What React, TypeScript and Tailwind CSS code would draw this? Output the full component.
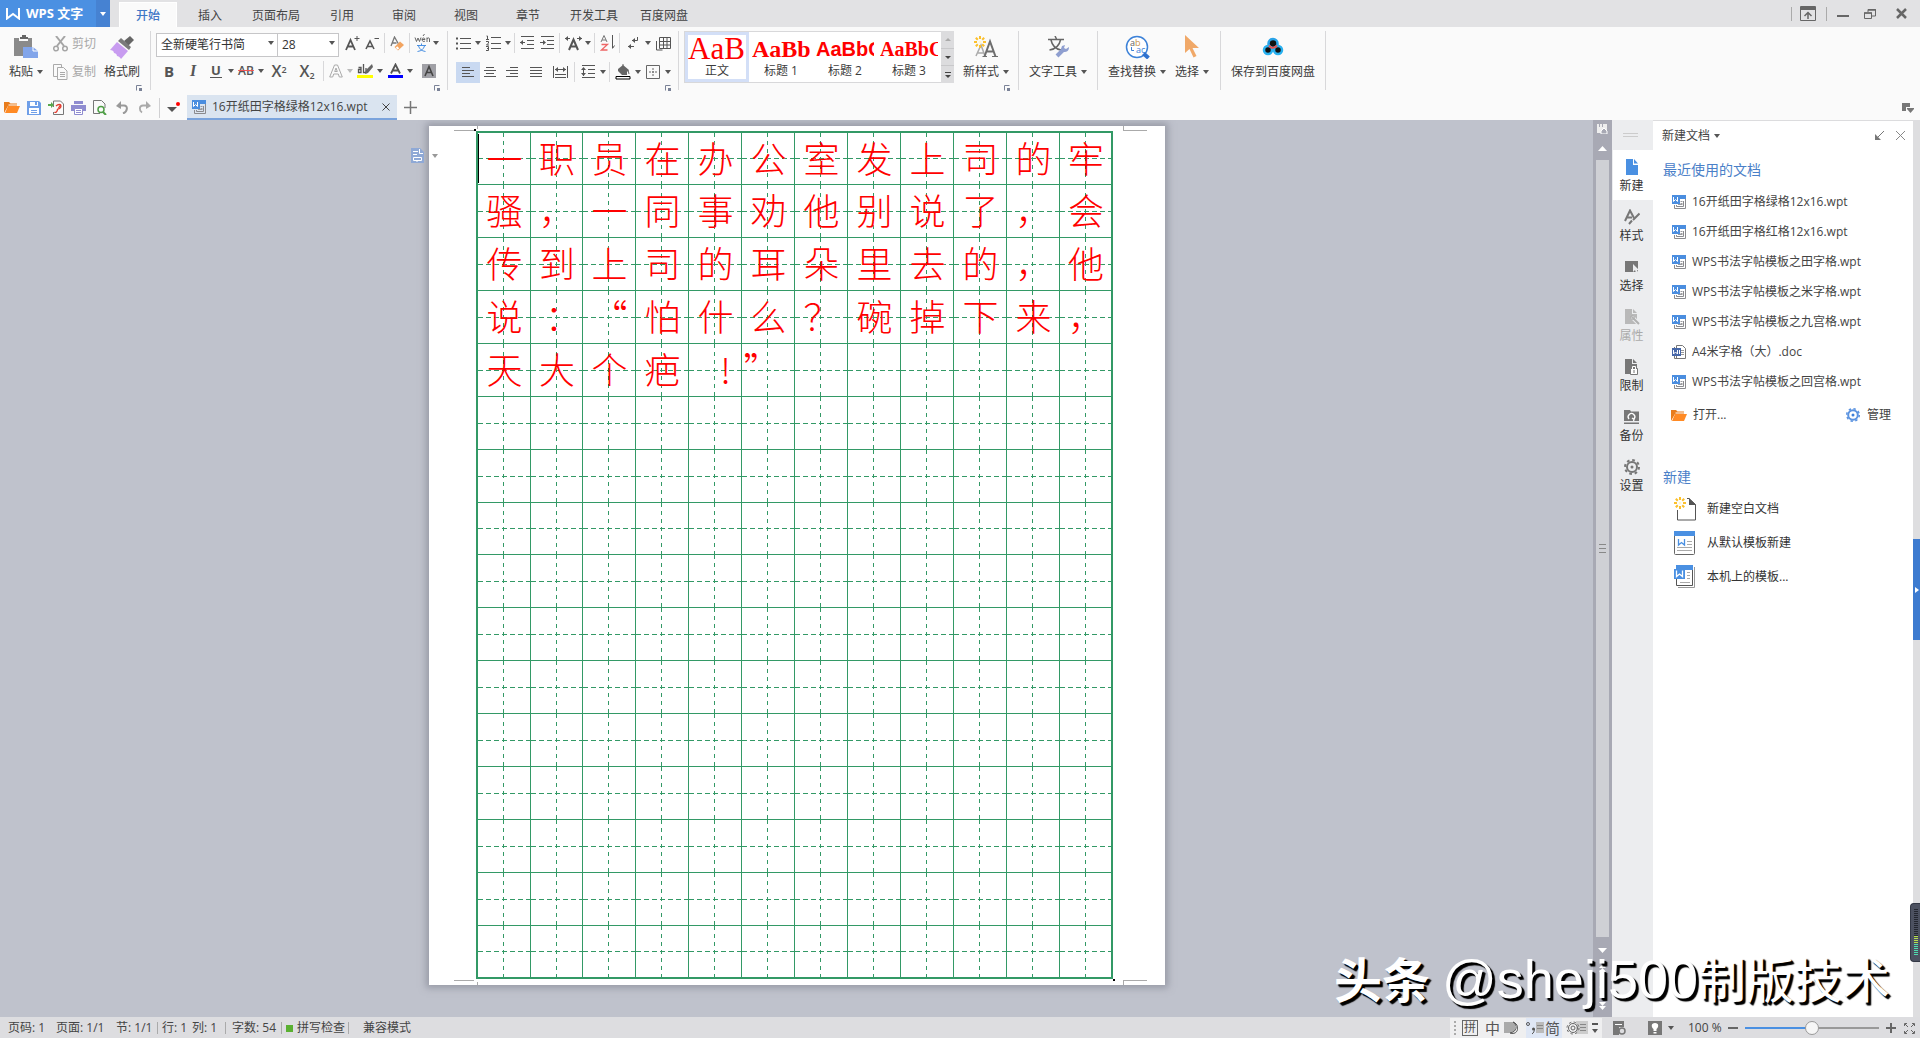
import React, { useState } from 'react';

const UI_FONT = "font-['Open_Sans','Noto_Sans_CJK_SC',sans-serif]";

const TABS = ['开始', '插入', '页面布局', '引用', '审阅', '视图', '章节', '开发工具', '百度网盘'];

const RECENT = [
  { name: '16开纸田字格绿格12x16.wpt', doc: false },
  { name: '16开纸田字格红格12x16.wpt', doc: false },
  { name: 'WPS书法字帖模板之田字格.wpt', doc: false },
  { name: 'WPS书法字帖模板之米字格.wpt', doc: false },
  { name: 'WPS书法字帖模板之九宫格.wpt', doc: false },
  { name: 'A4米字格（大）.doc', doc: true },
  { name: 'WPS书法字帖模板之回宫格.wpt', doc: false },
];

const LINES = ['一职员在办公室发上司的牢', '骚，一同事劝他别说了，会', '传到上司的耳朵里去的，他', '说：“怕什么？碗掉下来，', '天大个疤!”'];

const CELLS = Array.from({ length: 16 * 12 }, (_, i) => (LINES[Math.floor(i / 12)] || '')[i % 12] || '');

const STYLES = [
  { name: '正文', sample: 'AaB', cls: "font-['Liberation_Serif',serif] text-[31px]" },
  { name: '标题 1', sample: 'AaBb', cls: "font-['Liberation_Serif',serif] text-2xl font-bold" },
  { name: '标题 2', sample: 'AaBbC', cls: "font-['Liberation_Sans',sans-serif] text-xl font-bold" },
  { name: '标题 3', sample: 'AaBbC', cls: "font-['Liberation_Serif',serif] text-xl font-bold" },
];

/* ---------- small shared pieces ---------- */

const Svg = ({ w, h, label, children }: { w: number; h: number; label?: string; children: React.ReactNode }) => (
  <svg width={w} height={h} viewBox={`0 0 ${w} ${h}`} fill="none" aria-label={label} className="shrink-0">
    {children}
  </svg>
);

const Caret = ({ color = '#555' }: { color?: string }) => (
  <Svg w={6} h={4}>
    <path d="M0 0h6L3 4z" fill={color} />
  </Svg>
);

const Sep = () => <div className="mx-0.5 h-5 w-px bg-[#d8d8da]" />;

const GroupSep = () => <div className="h-[59px] w-px self-start bg-[#d8d8da]" />;

const Tool = ({ label, w = 'w-[22px]', children }: { label: string; w?: string; children: React.ReactNode }) => (
  <button aria-label={label} className={`flex h-5 shrink-0 items-center justify-center ${w}`}>
    {children}
  </button>
);

const Drop = ({ color }: { color?: string }) => (
  <button aria-label="更多" className="flex h-5 w-2 shrink-0 items-center justify-center">
    <Caret color={color} />
  </button>
);

const Launcher = () => (
  <button aria-label="对话框" className="flex h-[6px] justify-end">
    <Svg w={6} h={6}>
      <path d="M.5 5.5v-5h5" stroke="#7a8297" />
      <path d="M3 3h3v3H3z" fill="#7a8297" />
    </Svg>
  </button>
);

const BigTool = ({ label, drop, w, children }: { label: string; drop?: boolean; w: string; children: React.ReactNode }) => (
  <button className={`flex shrink-0 flex-col items-center ${w}`}>
    <span className="flex h-[31px] items-center justify-center">{children}</span>
    <span className="flex h-5 items-center gap-1 text-xs whitespace-nowrap text-[#3c3c3c]">
      {label}
      {drop && <Caret />}
    </span>
  </button>
);

/* ---------- icons ---------- */

const WptIcon = () => (
  <Svg w={14} h={14}>
    <path d="M0 0h14v4H8v5H0z" fill="#4a8ddf" />
    <path d="M1.500 2v4.500l2-2 2 2V2" stroke="#fff" />
    <path d="M13.500 4v9.500h-11V10M11.500 6v5.500h-7V10" stroke="#8a8a8e" />
    <path d="M8.500 6.500h2M8.500 8.500h2M6 9.500h4.500" stroke="#9a9a9e" />
  </Svg>
);

const DocIcon = () => (
  <Svg w={14} h={14}>
    <path d="M4.500.5h6l3 3v10h-9z" fill="#fff" stroke="#777" />
    <path d="M2.500 2v11.500h9" stroke="#777" />
    <path d="M9 5.500h3M9 7.500h3M9 9.500h3" stroke="#999" />
    <path d="M0 3h9v8H0z" fill="#4767a8" />
    <path d="M1.500 5v4l2-2 2 2V5M7.500 5v4" stroke="#fff" />
  </Svg>
);

const FolderIcon = () => (
  <Svg w={16} h={13}>
    <path d="M0 1h5l1.500 1.500H13V5H4L0 12z" fill="#e87c1c" />
    <path d="M4 5h12l-3 7H1z" fill="#ff8a24" />
    <path d="M4.500 4h9" stroke="#fff" />
  </Svg>
);

const Spark = () => (
  <g stroke="#fbc02d" strokeWidth="2">
    <path d="M6 0v3M6 9v3M0 6h3M9 6h3M1.800 1.800l2 2M8.200 8.200l2 2M10.200 1.800l-2 2M3.800 8.200l-2 2" />
    <circle cx="6" cy="6" r="1.500" fill="#fff6cf" stroke="none" />
  </g>
);

const AlignIcon = ({ rows }: { rows: number[][] }) => (
  <Svg w={13} h={12}>
    {rows.map(([x, w], i) => (
      <path key={i} d={`M${x} ${i * 3 + 1.5}h${w}`} stroke="#555" />
    ))}
  </Svg>
);

/* ---------- title bar ---------- */

const TitleBar = () => {
  const [tab, setTab] = useState('开始');
  return (
    <header className="flex h-[27px] shrink-0 items-stretch bg-[#e2e2e4]">
      <button className="flex w-24 items-center gap-1.5 bg-[#4b90e2] pl-1.5 text-[13px] font-bold whitespace-nowrap text-white">
        <Svg w={14} h={12}>
          <path d="M1 0v10.500l6-4.500 6 4.500V0" stroke="#fff" strokeWidth="2" />
        </Svg>
        WPS 文字
      </button>
      <button aria-label="菜单" className="flex w-3.5 items-center justify-center bg-[#4682d2]">
        <Caret color="#fff" />
      </button>
      <nav className="ml-[9px] flex gap-1 pt-0.5">
        {TABS.map(t => (
          <button
            key={t}
            onClick={() => setTab(t)}
            className={`pt-0.5 text-xs ${t.length > 2 ? 'w-[66px]' : 'w-[58px]'} ${
              t === tab ? 'border border-b-0 border-white bg-[#fafafa] font-medium text-[#3f76c5]' : 'text-[#444]'
            }`}
          >
            {t}
          </button>
        ))}
      </nav>
      <div className="ml-auto flex items-center text-[#666]">
        <div className="h-3.5 w-px bg-[#aaa]" />
        <button aria-label="功能区" className="px-2">
          <Svg w={16} h={15}>
            <path d="M.5.5h15v14H.5z" stroke="#666" />
            <path d="M1 1h14v3H1z" fill="#666" />
            <path d="M8 13V7M4.500 10L8 6.500l3.500 3.500" stroke="#666" strokeWidth="1.500" />
          </Svg>
        </button>
        <div className="ml-0.5 h-3.5 w-px bg-[#aaa]" />
        <button aria-label="最小化" className="pt-1 pr-[15px] pl-2.5">
          <Svg w={12} h={2}>
            <path d="M0 1h12" stroke="#666" strokeWidth="2" />
          </Svg>
        </button>
        <button aria-label="还原">
          <Svg w={12} h={10}>
            <path d="M.5 4h7v5.500h-7zM4 3V.500h7.500V7H8" stroke="#666" />
            <path d="M0 4h8M4 1h8" stroke="#666" strokeWidth="1.500" />
          </Svg>
        </button>
        <button aria-label="关闭" className="pr-[13px] pl-5">
          <Svg w={11} h={11}>
            <path d="M1 1l9 9M10 1l-9 9" stroke="#666" strokeWidth="2.500" />
          </Svg>
        </button>
      </div>
    </header>
  );
};

/* ---------- ribbon ---------- */

const ClipboardGroup = () => (
  <div className="flex w-[150px] flex-col">
    <div className="flex h-[53px]">
      <BigTool label="粘贴" drop w="ml-2 w-9">
        <Svg w={26} h={24}>
          <path d="M1 3h5v3h9V3h4v9h-4l-5 5v4H1z" fill="#8a8a8a" />
          <path d="M7 4V2h2V0h4v2h2v2z" fill="#666" />
          <path d="M10 12h10l5 4v7H10z" fill="#82a5ea" />
          <path d="M20 12v4h5" stroke="#fff" />
        </Svg>
      </BigTool>
      <div className="ml-[9px] flex flex-col text-xs text-[#a8a8a8]">
        <button className="flex h-[29px] items-center gap-1 pb-1">
          <Svg w={15} h={16}>
            <path d="M3 0l8 10M12 0L4 10" stroke="#a5a5a5" strokeWidth="2" />
            <circle cx="3" cy="12.500" r="2.300" stroke="#a5a5a5" strokeWidth="1.500" />
            <circle cx="12" cy="12.500" r="2.300" stroke="#a5a5a5" strokeWidth="1.500" />
          </Svg>
          剪切
        </button>
        <button className="flex h-6 items-center gap-1">
          <Svg w={15} h={16}>
            <path d="M4 12.500H.500V.500h8V3" stroke="#aaa" />
            <path d="M4.500 3.500h6l3.500 3.500v8.500H4.500z" stroke="#aaa" />
            <path d="M7 8.500h5M7 10.500h5M7 12.500h5" stroke="#aaa" />
          </Svg>
          复制
        </button>
      </div>
      <BigTool label="格式刷" w="ml-2 w-9">
        <Svg w={24} h={24}>
          <path d="M20 1l4 4-6 6-4-5z" fill="#666" />
          <path d="M11 3l10 9-2 3L8 6z" fill="#7a7a7a" />
          <path d="M7 7l11 9-7 8c-1-2-3-3-4-3 0-2-2-3-3-3 0-2-2-3-4-3z" fill="#c89cf0" />
        </Svg>
      </BigTool>
    </div>
    <div className="flex justify-end pt-px pr-2">
      <Launcher />
    </div>
  </div>
);

const FontGroup = () => (
  <div className="flex w-[296px] flex-col">
    <div className="flex h-6 items-center pl-[5px]">
      <div className="relative h-6 w-[122px]">
        <select aria-label="字体" className="h-full w-full appearance-none border border-[#c6c6c8] bg-white pl-1 text-xs text-[#333]">
          <option>全新硬笔行书简</option>
        </select>
        <span className="pointer-events-none absolute top-2.5 right-1">
          <Caret />
        </span>
      </div>
      <div className="relative -ml-px h-6 w-[62px]">
        <select aria-label="字号" className="h-full w-full appearance-none border border-[#c6c6c8] bg-white pl-1 text-xs text-[#333]">
          <option>28</option>
        </select>
        <span className="pointer-events-none absolute top-2.5 right-1">
          <Caret />
        </span>
      </div>
      <div className="ml-[3px] flex items-center">
        <Tool label="增大字号" w="w-5">
          <Svg w={15} h={15}>
            <path d="M1 14L5.500 4l4.500 10M2.500 10.500h6" stroke="#555" strokeWidth="1.800" />
            <path d="M12 0v5M9.500 2.500h5" stroke="#555" />
          </Svg>
        </Tool>
        <Tool label="减小字号" w="w-5">
          <Svg w={15} h={15}>
            <path d="M1 13L5 5l4 8M2.500 10.500h5" stroke="#555" strokeWidth="1.600" />
            <path d="M9.500 2.500H14" stroke="#555" />
          </Svg>
        </Tool>
        <Sep />
        <Tool label="清除格式" w="w-5">
          <Svg w={15} h={15}>
            <path d="M1 10L4.500 1l4 7M2.500 7h4" stroke="#777" strokeWidth="1.300" />
            <path d="M10 5.500L14 9l-6 5.500-3.500-3.500z" fill="#f2a460" />
            <path d="M6.500 11l2 2" stroke="#fff" strokeWidth="2" />
          </Svg>
        </Tool>
        <Sep />
        <Tool label="拼音指南" w="w-5">
          <Svg w={16} h={18}>
            <path
              d="M1 3.500l1.500 4L4 4l1.500 3.500 1.500-4M8 5.500h3c0-2-3-2-3 0s2 2.500 3 1.500M10.500 0L9 2M13 8V3.500M13 5c.5-1.500 2.500-1.500 2.500 0v3"
              stroke="#666"
            />
            <path d="M3 11.500h9M7.500 9.500v2M4.500 12c1 3 3 5 7 5.500M10.500 12c-1 3-3 5-7 5.500" stroke="#4a90e2" />
          </Svg>
        </Tool>
        <Drop />
      </div>
    </div>
    <div className="mt-1 flex h-6 items-center pl-1.5 text-[#555]">
      <Tool label="加粗" w="w-6">
        <b className="text-[15px]">B</b>
      </Tool>
      <Tool label="倾斜" w="w-6">
        <i className="font-['Liberation_Serif',serif] text-base font-bold">I</i>
      </Tool>
      <Tool label="下划线">
        <span className="border-b border-[#555] px-px text-[13px] leading-[13px] font-bold">U</span>
      </Tool>
      <Drop />
      <Tool label="删除线">
        <span className="text-xs font-semibold line-through decoration-[#e55]">AB</span>
      </Tool>
      <Drop />
      <Tool label="上标" w="w-7">
        <span className="text-base font-semibold">
          X<sup className="text-[9px]">2</sup>
        </span>
      </Tool>
      <Tool label="下标" w="w-7">
        <span className="text-base font-semibold">
          X<sub className="text-[9px]">2</sub>
        </span>
      </Tool>
      <Sep />
      <Tool label="文字效果" w="w-5">
        <Svg w={14} h={14}>
          <path d="M.700 13L5.500 1h3L13.300 13h-3l-1-3H4.700l-1 3zM5.700 7.500h2.600L7 4z" stroke="#aaa" />
        </Svg>
      </Tool>
      <Drop color="#bbb" />
      <Tool label="突出显示">
        <Svg w={16} h={16}>
          <path d="M0 12h16v3H0z" fill="#ff0" />
          <path d="M1.500 4.500h2.500v5H1.500v-3H4M6.500 1v8.500H9V5" stroke="#555" strokeWidth="1.300" />
          <path d="M15 1L9 7l-1 4 3-1 5-6z" fill="#666" />
        </Svg>
      </Tool>
      <Drop />
      <Tool label="字体颜色">
        <Svg w={15} h={16}>
          <path d="M0 12h15v3H0z" fill="#00f" />
          <path d="M3 10.500l4.500-9 4.500 9M4.500 7.500h6" stroke="#555" strokeWidth="1.800" />
        </Svg>
      </Tool>
      <Drop />
      <Tool label="字符底纹" w="w-[30px]">
        <Svg w={14} h={14}>
          <path d="M0 0h14v14H0z" fill="#a0a0a6" />
          <path d="M3 12l4-9.500 4 9.500M4.500 8.500h5" stroke="#444" strokeWidth="1.600" />
        </Svg>
      </Tool>
    </div>
    <div className="flex justify-end pt-0.5 pr-[7px]">
      <Launcher />
    </div>
  </div>
);

const ParagraphGroup = () => (
  <div className="flex w-[230px] flex-col">
    <div className="flex h-6 items-center pl-1">
      <Tool label="项目符号">
        <Svg w={15} h={14}>
          <path d="M4 2.500h11M4 7.500h11M4 12.500h11" stroke="#555" />
          <path d="M0 1.500h2v2H0zM0 6.500h2v2H0zM0 11.500h2v2H0z" fill="#555" />
        </Svg>
      </Tool>
      <Drop />
      <Tool label="编号">
        <Svg w={15} h={16}>
          <path d="M5 2.500h10M5 8.500h10M5 13.500h10" stroke="#555" />
          <path d="M.500 1h1v3M0 4.500h3M0 6.500h2.500v1.500L.500 10h2.500M0 11.500h2.500v4H0M1 13.500h1" stroke="#555" />
        </Svg>
      </Tool>
      <Drop />
      <Sep />
      <Tool label="减少缩进" w="w-5">
        <Svg w={14} h={14}>
          <path d="M1 .500h13M7 4.500h7M7 8.500h7M1 12.500h13M0 6.500h5" stroke="#555" />
          <path d="M3 4v5L0 6.500z" fill="#555" />
        </Svg>
      </Tool>
      <Tool label="增加缩进" w="w-5">
        <Svg w={14} h={14}>
          <path d="M1 .500h13M7 4.500h7M7 8.500h7M1 12.500h13M0 6.500h5" stroke="#555" />
          <path d="M3 4v5l3-2.500z" fill="#555" />
        </Svg>
      </Tool>
      <Sep />
      <Tool label="字符缩放">
        <Svg w={17} h={15}>
          <path d="M4 14L8.500 3.500l4.500 10.500M5 10.500h7" stroke="#555" strokeWidth="2" />
          <path d="M0 2.500h5M12 2.500h5" stroke="#555" />
          <path d="M3 0v5L0 2.500zM14 0v5l3-2.500z" fill="#555" />
        </Svg>
      </Tool>
      <Drop />
      <Sep />
      <Tool label="排序" w="w-5">
        <Svg w={15} h={16}>
          <path d="M1 7l3-6.500L7 7M2 5h4" stroke="#777" />
          <path d="M1.500 9.500h6L1.500 15h6" stroke="#e66" strokeWidth="1.300" />
          <path d="M12.500 0v13M12.500 13.500l2-3" stroke="#555" />
        </Svg>
      </Tool>
      <Sep />
      <Tool label="显示标记">
        <Svg w={12} h={14}>
          <path d="M10.500 1v3.500H5M1 10.500h6" stroke="#555" />
          <path d="M8 2v5L5 4.500zM4 8v5l-3-2.500z" fill="#555" />
        </Svg>
      </Tool>
      <Drop />
      <Tool label="表格">
        <Svg w={15} h={15}>
          <path d="M3.500 1.500h11v11h-11zM3.500 5.500h11M3.500 9h11M7.500 1.500v11M11 1.500v11M.500 5v9h6" stroke="#555" />
        </Svg>
      </Tool>
    </div>
    <div className="mt-[5px] flex h-6 items-center pl-2">
      <button aria-label="左对齐" className="flex h-[21px] w-6 items-center justify-center bg-[#c9d9f1]">
        <AlignIcon rows={[[0, 8], [0, 12], [0, 8], [0, 12]]} />
      </button>
      <Tool label="居中" w="w-5">
        <AlignIcon rows={[[2, 8], [0, 12], [2, 8], [0, 12]]} />
      </Tool>
      <Tool label="右对齐" w="w-6">
        <AlignIcon rows={[[4, 8], [0, 12], [4, 8], [0, 12]]} />
      </Tool>
      <Tool label="两端对齐" w="w-6">
        <AlignIcon rows={[[0, 12], [0, 12], [0, 12], [0, 12]]} />
      </Tool>
      <Tool label="分散对齐" w="w-6">
        <Svg w={15} h={12}>
          <path d="M.500 0v12M14.500 0v12M2 3.500h11M2 8.500h11M2 11.500h11" stroke="#555" />
          <path d="M5 1v5L2 3.500zM10 1v5l3-2.500z" fill="#555" />
        </Svg>
      </Tool>
      <Sep />
      <Tool label="行距">
        <Svg w={15} h={14}>
          <path d="M1 .500h13M7 4.500h7M7 8.500h7M1 12.500h13M2.500 3v8" stroke="#555" />
          <path d="M0 5h5L2.500 2zM0 8h5l-2.500 3z" fill="#555" />
        </Svg>
      </Tool>
      <Drop />
      <Sep />
      <Tool label="底纹颜色">
        <Svg w={16} h={16}>
          <path d="M3 5l5-4 6 5-2 2v3l-5 0-4-4z" fill="#666" />
          <path d="M8 0v4M13 6l1 4" stroke="#666" />
          <path d="M1 12.500h14v2.500H1z" fill="#fff" stroke="#000" />
        </Svg>
      </Tool>
      <Drop />
      <Tool label="边框">
        <Svg w={14} h={14}>
          <path d="M.500.500h13v13H.500z" stroke="#666" />
          <path d="M7 3v8M3 7h8" stroke="#666" strokeDasharray="2 1" />
        </Svg>
      </Tool>
      <Drop />
    </div>
    <div className="flex justify-end pt-px pr-[7px]">
      <Launcher />
    </div>
  </div>
);

const StyleGroup = () => (
  <div className="flex w-[339px] pl-[5px]">
    <div className="flex h-[52px] border border-[#d8d8da] bg-white">
      {STYLES.map((s, i) => (
        <button
          key={s.name}
          className={`flex w-16 flex-col items-center overflow-hidden border-[3px] ${i === 0 ? 'border-[#d3dff7]' : 'border-transparent'}`}
        >
          <span className={`flex h-7 w-full shrink-0 items-center overflow-hidden leading-7 whitespace-nowrap text-[#f00] ${s.cls}`}>{s.sample}</span>
          <span className="text-xs leading-4 text-[#3c3c3c]">{s.name}</span>
        </button>
      ))}
      <div className="-my-px -mr-px flex w-[13px] flex-col gap-px bg-[#c8c8ca]">
        {['#aaa', '#444', '#444'].map((c, i) => (
          <button key={i} aria-label="滚动样式" className="flex flex-1 flex-col items-center justify-center gap-0.5 bg-[#dcdcde]">
            {i === 2 && <span className="h-px w-1.5 bg-[#444]" />}
            {i === 0 ? (
              <Svg w={6} h={3}>
                <path d="M0 3h6L3 0z" fill={c} />
              </Svg>
            ) : (
              <Svg w={6} h={3}>
                <path d="M0 0h6L3 3z" fill={c} />
              </Svg>
            )}
          </button>
        ))}
      </div>
    </div>
    <div className="flex flex-1 flex-col">
      <BigTool label="新样式" drop w="h-[53px] w-full">
        <Svg w={24} h={22}>
          <path d="M2 20l5-11 4 11M4 17h6" stroke="#aaa" strokeWidth="1.500" />
          <path d="M10.500 20.500L16 5.500l5.500 15M12.500 15.500h7" stroke="#6e6e6e" strokeWidth="2" />
          <path d="M8.500 20.500h4.500M18 20.500h6" stroke="#6e6e6e" />
          <Spark />
        </Svg>
      </BigTool>
      <div className="flex justify-end pt-px pr-2">
        <Launcher />
      </div>
    </div>
  </div>
);

const Ribbon = () => (
  <div className="flex h-[66px] shrink-0 items-start bg-[#fafafa] pt-1">
    <ClipboardGroup />
    <GroupSep />
    <FontGroup />
    <GroupSep />
    <ParagraphGroup />
    <GroupSep />
    <StyleGroup />
    <GroupSep />
    <BigTool label="文字工具" drop w="w-[78px]">
      <Svg w={22} h={22}>
        <path d="M1 3.500h16M8 0l1.500 3M4 4c1 5 5 9 10 10M13.500 4c-1 5-5 9-11 10" stroke="#666" strokeWidth="1.500" />
        <path d="M10 20l7-7" stroke="#8f9fd0" strokeWidth="4" />
        <path d="M15 10l3-1-1 3 2 1 3-2c0 4-2 5-5 5l-3-3z" fill="#8f9fd0" />
      </Svg>
    </BigTool>
    <GroupSep />
    <BigTool label="查找替换" drop w="ml-2 w-[62px]">
      <Svg w={25} h={24}>
        <circle cx="12" cy="12" r="10.500" fill="#fff" stroke="#3d82d8" strokeWidth="1.500" />
        <path d="M18.500 18.500l5 4.500" stroke="#2f72cf" strokeWidth="4" />
        <text x="5" y="11" fontSize="9" fill="#666">
          a<tspan fill="#c9924a">b</tspan>
        </text>
        <text x="11" y="18" fontSize="9" fill="#3d82d8">
          ac
        </text>
        <path d="M6.500 12v3.500H9" stroke="#3d82d8" />
      </Svg>
    </BigTool>
    <BigTool label="选择" drop w="ml-px w-[46px]">
      <Svg w={16} h={23}>
        <path d="M1 0v18l4.500-4 4 8.500 3-1.500-4-8H15z" fill="#f0a868" />
      </Svg>
    </BigTool>
    <div className="w-[5px]" />
    <GroupSep />
    <BigTool label="保存到百度网盘" w="w-[104px]">
      <Svg w={22} h={20}>
        <path d="M11 6v2L6 13M11 8l5 5" stroke="#111" strokeWidth="8" />
        <circle cx="11" cy="6.500" r="4.500" fill="#111" stroke="#29a3e8" strokeWidth="2.500" />
        <circle cx="6" cy="13" r="4" fill="#111" stroke="#29b1f0" strokeWidth="2.500" />
        <circle cx="16" cy="13" r="4" fill="#111" stroke="#29b1f0" strokeWidth="2.500" />
        <path d="M7 8.500c2 3 6 3 8 0" stroke="#e8504e" strokeWidth="2" />
      </Svg>
    </BigTool>
    <GroupSep />
  </div>
);

/* ---------- quick access and document tab ---------- */

const QuickBar = () => (
  <div className="flex h-[27px] shrink-0 items-end bg-[#fafafa] pl-px">
    <div className="flex h-[25px] items-center">
      <Tool label="打开">
        <FolderIcon />
      </Tool>
      <Tool label="保存">
        <Svg w={14} h={14}>
          <path d="M0 0h12l2 2v12H0z" fill="#6f9fe8" />
          <path d="M3 1h8v4H3zM2 7h10v6H2z" fill="#fff" />
          <path d="M8 1h2v3H8zM4 9h6v1H4zM4 11h6v1H4z" fill="#6f9fe8" />
        </Svg>
      </Tool>
      <Tool label="输出PDF">
        <Svg w={16} h={15}>
          <path d="M5.500 7V1h7l3 3v10.500h-10V12" stroke="#777" />
          <path d="M10.500 8l2-3M8 6c2-2 5-2 5 0s-2 3-3.500 3M9.500 9c0 3-2 4-3 3" stroke="#e23b2e" strokeWidth="1.300" />
          <path d="M0 4h3V2l3 3-3 3V6H0z" fill="#58a84c" />
        </Svg>
      </Tool>
      <Tool label="打印">
        <Svg w={15} h={14}>
          <path d="M3 0h9v3H3zM0 4h15v6H0z" fill="#8f8cd0" />
          <path d="M3.500 7.500h8v6h-8z" fill="#fff" stroke="#8f8cd0" />
          <path d="M5 9.500h5M5 11.500h5" stroke="#8f8cd0" />
        </Svg>
      </Tool>
      <Tool label="打印预览">
        <Svg w={14} h={15}>
          <path d="M7 13.500H.500V.500h8L12 4v4" stroke="#777" />
          <circle cx="8" cy="9.500" r="3" stroke="#4f9e46" strokeWidth="1.500" />
          <path d="M10 12l3 3" stroke="#4f9e46" strokeWidth="2" />
        </Svg>
      </Tool>
      <Tool label="撤销">
        <Svg w={13} h={13}>
          <path d="M2 4.500h6c4 0 4 6-1 8" stroke="#999" strokeWidth="2" />
          <path d="M5 0v8L0 5z" fill="#999" />
        </Svg>
      </Tool>
      <Tool label="恢复">
        <Svg w={13} h={13}>
          <path d="M11 4.500H5c-4 0-4 5-1 7" stroke="#aaa" strokeWidth="1.800" />
          <path d="M8 0v8l5-3z" fill="#aaa" />
        </Svg>
      </Tool>
      <div className="ml-1 h-5 w-px bg-[#d0d0d2]" />
      <button aria-label="自定义" className="ml-1.5 flex w-[21px]">
        <Svg w={14} h={14}>
          <path d="M1 6h10l-5 5z" fill="#555" />
          <circle cx="12" cy="3" r="2" fill="#f00" />
        </Svg>
      </button>
    </div>
    <div className="flex h-[25px] w-[210px] items-center border-b-2 border-[#7aa3dc] bg-[#dae4f0] pl-[5px] text-xs text-[#444]">
      <WptIcon />
      <span className="ml-1.5 flex-1 whitespace-nowrap">16开纸田字格绿格12x16.wpt</span>
      <button aria-label="关闭文档" className="pr-[7px]">
        <Svg w={8} h={8}>
          <path d="M.500.500l7 7M7.500.500l-7 7" stroke="#444" />
        </Svg>
      </button>
    </div>
    <button aria-label="新建标签" className="ml-[7px] flex h-[25px] items-center">
      <Svg w={13} h={13}>
        <path d="M6.500 0v13M0 6.500h13" stroke="#777" strokeWidth="1.500" />
      </Svg>
    </button>
    <button aria-label="窗口列表" className="mr-1.5 ml-auto flex h-[25px] items-center">
      <Svg w={12} h={10}>
        <path d="M0 0h8v4H4v4H0z" fill="#777" />
        <path d="M5 5h7v1L8.500 10 5 6z" fill="#777" />
      </Svg>
    </button>
  </div>
);

/* ---------- document ---------- */

// dashed centre lines of one writing cell
const CELL =
  'flex items-center justify-center border-r border-b border-[#339966] pb-1 pl-0.5 [background-image:repeating-linear-gradient(to_bottom,#339966_0_4px,transparent_4px_8px),repeating-linear-gradient(to_right,#339966_0_5px,transparent_5px_8px)] [background-size:1px_100%,100%_1px] [background-position:center] [background-repeat:no-repeat]';

const Page = () => (
  <main className="relative flex min-w-0 flex-1 justify-center overflow-hidden bg-[#bfc2cc] pt-1.5">
    <article className="relative h-[859px] w-[736px] shrink-0 bg-white pt-[5px] pl-[47px] shadow-[0_0_7px_3px_rgba(120,122,135,0.55)]">
      <div className="grid w-[637px] grid-cols-[53px_52px_repeat(9,53px)_51px] grid-rows-[52px_repeat(6,53px)_52px_repeat(7,53px)_51px] border-2 border-[#339966]">
        {CELLS.map((ch, i) => (
          <div
            key={i}
            className={`${CELL} ${i % 12 === 11 ? 'border-r-0' : ''} ${i >= 180 ? 'border-b-0' : ''} font-['Noto_Sans_CJK_SC',sans-serif] text-4xl leading-none font-light text-[#f00]`}
          >
            <span className={ch === '”' ? 'mr-auto' : ch === '!' ? 'pl-5' : ch === '：' ? 'pl-3' : ''}>{ch}</span>
          </div>
        ))}
      </div>
      {/* margin marks and the caret sit over the sheet */}
      <div className="absolute top-1 left-[25px] h-px w-[22px] bg-[#aaa]" />
      <div className="absolute top-0 left-12 h-[3px] w-px bg-[#aaa]" />
      <div className="absolute top-[3px] left-[45px] h-0.5 w-0.5 bg-black" />
      <div className="absolute top-0 left-[694px] h-[5px] w-6 border-b border-l border-[#aaa]" />
      <div className="absolute bottom-1 left-[25px] h-px w-5 bg-[#aaa]" />
      <div className="absolute bottom-0 left-12 h-[3px] w-px bg-[#aaa]" />
      <div className="absolute bottom-1 left-[684px] h-0.5 w-0.5 bg-black" />
      <div className="absolute bottom-0 left-[694px] h-[5px] w-6 border-t border-l border-[#aaa]" />
      <div className="absolute top-2 left-[49px] h-[49px] w-px bg-black" />
      <button aria-label="段落布局" className="absolute top-[22px] -left-[18px] flex items-center gap-2">
        <Svg w={13} h={15}>
          <path d="M0 0h9l4 4v11H0z" fill="#8fa9d6" />
          <path d="M2 3.500h5M2 6.500h4M2.500 9.500h8v3h-8zM6 12v2M8.500 1v4.500H12" stroke="#fff" />
        </Svg>
        <Caret color="#999" />
      </button>
    </article>
  </main>
);

const ScrollBar = () => (
  <div className="flex w-[19px] shrink-0 flex-col items-center bg-[#a8a9b4]">
    <button aria-label="标尺" className="flex h-[18px] items-center">
      <Svg w={11} h={10}>
        <path d="M0 0h10v9H0z" fill="#eee" />
        <path d="M2.500 0v3M5.500 0v3" stroke="#a8a9b4" />
        <path d="M4 7l3-3 3 3v3H4z" fill="#a8a9b4" stroke="#fff" />
      </Svg>
    </button>
    <button aria-label="向上" className="flex h-[22px] items-center pb-0.5">
      <Svg w={9} h={5}>
        <path d="M0 5h9L4.500 0z" fill="#fff" />
      </Svg>
    </button>
    <div className="flex w-[13px] flex-1 flex-col items-center justify-center gap-[3px] bg-[#cfd0d5]">
      <span className="h-px w-[7px] bg-[#888]" />
      <span className="h-px w-[7px] bg-[#888]" />
      <span className="h-px w-[7px] bg-[#888]" />
    </div>
    <div className="flex h-20 flex-col items-center justify-between pt-[11px] pb-[7px]">
      <Svg w={9} h={5}>
        <path d="M0 0h9L4.500 5z" fill="#fff" />
      </Svg>
      <Svg w={7} h={8}>
        <path d="M0 4h7L3.500 0zM0 8h7L3.500 4z" fill="#fff" />
      </Svg>
      <Svg w={8} h={8}>
        <circle cx="4" cy="4" r="3" stroke="#ddd" />
      </Svg>
      <Svg w={7} h={8}>
        <path d="M0 0h7L3.500 4zM0 4h7L3.500 8z" fill="#fff" />
      </Svg>
    </div>
  </div>
);

/* ---------- task pane ---------- */

const SIDE = [
  {
    name: '新建',
    icon: (
      <Svg w={16} h={16}>
        <path d="M2 0h7v6h5v10H2z" fill="#4a90e2" />
        <path d="M10 0l4 4.500h-4z" fill="#4a90e2" />
      </Svg>
    ),
  },
  {
    name: '样式',
    icon: (
      <Svg w={16} h={16}>
        <path d="M1 12L6 1.500 10 9M3 8.500h5" stroke="#777" strokeWidth="2" />
        <path d="M15.500 4.500L9 11M8 11.500L5 15" stroke="#777" strokeWidth="2" />
      </Svg>
    ),
  },
  {
    name: '选择',
    icon: (
      <Svg w={16} h={16}>
        <path d="M1 2h13v11H1z" fill="#777" />
        <path d="M9 5v8l2-2 1 3 2-1-1-2h2z" fill="#ecedef" />
      </Svg>
    ),
  },
  {
    name: '属性',
    icon: (
      <Svg w={16} h={16}>
        <path d="M1 0h7v5h5v10H1z" fill="#b9b9b9" />
        <path d="M9 0l4 4H9z" fill="#b9b9b9" />
        <path d="M8 8l7 7" stroke="#ecedef" strokeWidth="4" />
        <path d="M8 8l7 7" stroke="#b0b0b0" strokeWidth="2" />
        <circle cx="8.500" cy="8.500" r="2" stroke="#b0b0b0" />
      </Svg>
    ),
  },
  {
    name: '限制',
    icon: (
      <Svg w={16} h={16}>
        <path d="M1 0h7v5h5v10H1z" fill="#777" />
        <path d="M9 0l4 4H9z" fill="#777" />
        <path d="M6.500 9.500h7v6h-7z" fill="#fff" stroke="#777" />
        <path d="M8.500 10V7.500h3V10" stroke="#fff" />
        <path d="M10 11v3" stroke="#777" />
      </Svg>
    ),
  },
  {
    name: '备份',
    icon: (
      <Svg w={16} h={16}>
        <path d="M0 1h6l1 1.500h8V12H0zM0 13.500h15V15H0z" fill="#777" />
        <path d="M5 10A3.300 3.300 0 1 1 10 10M8 9l2 1.500L9.500 12" stroke="#fff" strokeWidth="1.300" />
      </Svg>
    ),
  },
  {
    name: '设置',
    icon: (
      <Svg w={16} h={16}>
        <circle cx="8" cy="8" r="5" stroke="#777" strokeWidth="2" />
        <circle cx="8" cy="8" r="7" stroke="#777" strokeWidth="2" strokeDasharray="2.700 2.800" />
        <circle cx="8" cy="8" r="1.500" fill="#777" />
      </Svg>
    ),
  },
];

const SideTabs = () => (
  <nav className="flex w-[41px] shrink-0 flex-col bg-[#ecedef] text-xs text-[#333]">
    <div className="flex h-[30px] flex-col items-center justify-center gap-0.5 pr-1">
      <span className="h-px w-[15px] bg-[#ccc]" />
      <span className="h-px w-[15px] bg-[#ccc]" />
    </div>
    {SIDE.map((s, i) => (
      <button
        key={s.name}
        className={`ml-px flex h-[50px] flex-col items-center gap-0.5 pt-[9px] pr-[3px] ${i === 0 ? 'bg-white' : ''} ${s.name === '属性' ? 'text-[#aaa]' : ''}`}
      >
        {s.icon}
        <span className="leading-[18px]">{s.name}</span>
      </button>
    ))}
  </nav>
);

const TaskPane = () => (
  <aside className="flex w-[260px] shrink-0 flex-col border-t border-[#dcdcde] bg-white text-xs text-[#444]">
    <div className="flex h-[29px] items-center pl-[9px]">
      <button className="flex items-center gap-1">
        新建文档
        <Caret />
      </button>
      <button aria-label="停靠" className="mr-3 ml-auto">
        <Svg w={9} h={9}>
          <path d="M9 0L1 8" stroke="#777" />
          <path d="M0 3v6h6z" fill="#777" />
        </Svg>
      </button>
      <button aria-label="关闭窗格" className="mr-2">
        <Svg w={9} h={9}>
          <path d="M0 0l9 9M9 0L0 9" stroke="#888" />
        </Svg>
      </button>
    </div>
    <h2 className="mt-2 pl-2.5 text-sm leading-6 text-[#4a80c8]">最近使用的文档</h2>
    <ul className="mt-[5px]">
      {RECENT.map(r => (
        <li key={r.name} className="flex h-[30px] items-center pl-[19px]">
          <a href="#" className="flex items-center gap-1.5 whitespace-nowrap">
            {r.doc ? <DocIcon /> : <WptIcon />}
            {r.name}
          </a>
        </li>
      ))}
    </ul>
    <div className="mt-[3px] flex h-[30px] items-center justify-between pr-[22px] pl-[18px]">
      <button className="flex items-center gap-1.5">
        <FolderIcon />
        打开...
      </button>
      <button className="flex items-center gap-[7px]">
        <Svg w={14} h={14}>
          <circle cx="7" cy="7" r="4.800" stroke="#5b93e0" strokeWidth="2" />
          <circle cx="7" cy="7" r="6.300" stroke="#5b93e0" strokeWidth="1.500" strokeDasharray="2.400 2.500" />
          <circle cx="7" cy="7" r="1.500" fill="#3d7fd8" />
        </Svg>
        管理
      </button>
    </div>
    <h2 className="mt-[35px] pl-2.5 text-sm leading-6 text-[#4a80c8]">新建</h2>
    <ul className="mt-[3px] text-[#333]">
      <li className="flex h-[34px] items-center pl-[21px]">
        <button className="flex items-center gap-[11px]">
          <Svg w={22} h={24}>
            <path d="M13 1.500h2l6.500 6v15.500h-18V13" stroke="#555" />
            <path d="M15 1l7 7h-7z" fill="#555" />
            <Spark />
          </Svg>
          新建空白文档
        </button>
      </li>
      <li className="flex h-[34px] items-center pl-[21px]">
        <button className="flex items-center gap-[11px]">
          <Svg w={22} h={24}>
            <rect x=".500" y=".500" width="20" height="23" rx="1" stroke="#666" />
            <path d="M0 0h21v5H0z" fill="#4a90e2" />
            <path d="M4.500 8v6l3-2.500 3 2.500V8" stroke="#4a90e2" strokeWidth="1.300" />
            <path d="M13 10.500h5M13 13.500h5M3 16.500h15M3 19.500h15" stroke="#aaa" />
          </Svg>
          从默认模板新建
        </button>
      </li>
      <li className="flex h-[34px] items-center pl-[21px]">
        <button className="flex items-center gap-[11px]">
          <Svg w={22} h={24}>
            <path d="M20.500 2v20.500H4" stroke="#999" />
            <path d="M2.500 14v6.500h16V2" stroke="#555" />
            <path d="M2 0h17v5h-8v9H0V4h2z" fill="#4a90e2" />
            <path d="M2.500 5.500v6l3-2.500 3 2.500v-6" stroke="#fff" strokeWidth="1.300" />
            <path d="M13 7.500h3M13 10.500h3M13 13.500h3M6 17.500h10" stroke="#aaa" />
          </Svg>
          本机上的模板...
        </button>
      </li>
    </ul>
  </aside>
);

const EdgeStrip = () => (
  <div className="relative flex w-[7px] shrink-0 flex-col bg-[#dedee0] pt-[419px]">
    <button aria-label="展开" className="flex h-[101px] items-center justify-center bg-[#3d7bd0]">
      <Svg w={4} h={6}>
        <path d="M0 0l4 3-4 3z" fill="#fff" />
      </Svg>
    </button>
    {/* sound meter, clipped by the screen edge */}
    <div className="absolute top-[783px] right-0 flex h-[59px] w-2.5 flex-col justify-center rounded-l border border-r-0 border-[#333845] bg-[#4c5160] pr-0.5 pl-[3px]">
      <div className="h-[27px] bg-[repeating-linear-gradient(to_bottom,#23262f_0_1px,transparent_1px_2px)]" />
      <div className="h-2 bg-[repeating-linear-gradient(to_bottom,#b4e04c_0_1px,transparent_1px_2px)]" />
      <div className="h-3 bg-[repeating-linear-gradient(to_bottom,#4fdcae_0_1px,transparent_1px_2px)]" />
    </div>
  </div>
);

/* ---------- status bar ---------- */

const StatusBar = () => (
  <footer className="flex h-[21px] shrink-0 items-center bg-[#dddde0] pt-px pl-2 text-xs whitespace-nowrap text-[#444]">
    <span className="w-12">页码: 1</span>
    <span className="w-[60px]">页面: 1/1</span>
    <span className="w-[41px]">节: 1/1</span>
    <span className="h-3 w-px bg-[#aaa]" />
    <span className="w-[34px] pl-1">行: 1</span>
    <span className="w-[33px]">列: 1</span>
    <span className="h-3 w-px bg-[#aaa]" />
    <span className="w-[55px] pl-1.5">字数: 54</span>
    <span className="h-3 w-px bg-[#aaa]" />
    <button className="flex w-[66px] items-center gap-1 pl-1">
      <span className="size-[7px] bg-[#5ab031]" />
      拼写检查
    </button>
    <span className="h-3 w-px bg-[#aaa]" />
    <span className="pl-3.5">兼容模式</span>

    <div className="ml-auto flex h-full w-[152px] items-center bg-[#efeff0] text-[#555]">
      <span className="ml-1 h-3.5 w-0.5 bg-[repeating-linear-gradient(to_bottom,#aaa_0_2px,transparent_2px_4px)]" />
      <span className="ml-1.5 flex size-4 items-center justify-center border border-[#666] text-xs leading-none">拼</span>
      <span className="ml-[7px] text-[15px]">中</span>
      <span className="ml-1 flex">
        <Svg w={14} h={14}>
          <path d="M0 1h11v11H0z" fill="#aaa" />
          <path d="M9 1c5 3 4 10-3 11 8 3 11-8 3-11z" fill="#eee" stroke="#555" />
        </Svg>
      </span>
      <span className="ml-2 flex h-full w-9 items-center justify-between bg-[#dfe7f5] pr-0.5 text-[15px]">
        <Svg w={18} h={14}>
          <path d="M10 1h8v11h-8z" fill="#bbb" />
          <path d="M11 4.500h6M11 7.500h6" stroke="#888" />
          <circle cx="2" cy="3" r="1.500" stroke="#555" />
          <circle cx="7.500" cy="8" r="1.500" fill="#555" />
          <path d="M8.500 8c0 2-1 4-2.500 5" stroke="#555" />
        </Svg>
        <span>简</span>
      </span>
      <span className="ml-1 flex items-center">
        <Svg w={22} h={14}>
          <path d="M10 0h12v13H10z" fill="#ccc" />
          <path d="M14 3.500h6M14 6.500h6M14 9.500h6" stroke="#888" />
          <circle cx="7" cy="7" r="4.500" stroke="#666" />
          <circle cx="7" cy="7" r="6" stroke="#666" strokeDasharray="2.300 2.400" />
          <circle cx="7" cy="7" r="2" stroke="#666" />
        </Svg>
      </span>
      <span className="ml-1 flex flex-col gap-1">
        <span className="h-0.5 w-1.5 bg-[#555]" />
        <Caret />
      </span>
    </div>
    <button aria-label="阅读" className="ml-[11px]">
      <Svg w={13} h={14}>
        <path d="M0 0h11v6H6v8H0z" fill="#777" />
        <path d="M2 3.500h7" stroke="#fff" />
        <circle cx="9" cy="10" r="3" stroke="#777" strokeWidth="1.500" />
      </Svg>
    </button>
    <button aria-label="护眼" className="ml-[22px] flex items-center gap-1.5">
      <Svg w={14} h={14}>
        <path d="M0 0h14v14H0z" fill="#777" />
        <path d="M7 2c4 0 4 4 1.500 6v2h-3V8C3 6 3 2 7 2zM5.500 11h3v1.500h-3z" fill="#fff" />
      </Svg>
      <Caret />
    </button>
    <label htmlFor="zoom" className="ml-3.5 w-[38px]">
      100 %
    </label>
    <button aria-label="缩小" className="ml-0.5">
      <Svg w={10} h={2}>
        <path d="M0 1h10" stroke="#666" strokeWidth="2" />
      </Svg>
    </button>
    <input
      id="zoom"
      type="range"
      min={0}
      max={100}
      defaultValue={50}
      className="mx-[7px] h-4 w-[134px] appearance-none bg-[linear-gradient(to_right,#4a90e2_50%,#999_50%)] bg-[length:100%_2px] bg-center bg-no-repeat [&::-webkit-slider-thumb]:size-3.5 [&::-webkit-slider-thumb]:appearance-none [&::-webkit-slider-thumb]:rounded-full [&::-webkit-slider-thumb]:border [&::-webkit-slider-thumb]:border-[#999] [&::-webkit-slider-thumb]:bg-[#f6f6f6]"
    />
    <button aria-label="放大">
      <Svg w={10} h={10}>
        <path d="M5 0v10M0 5h10" stroke="#666" strokeWidth="2" />
      </Svg>
    </button>
    <button aria-label="全屏" className="mr-[5px] ml-2">
      <Svg w={11} h={11}>
        <path d="M.500 3V.500H3M8 .500h2.500V3M.500 8v2.500H3M8 10.500h2.500V8M1 1l3 3M10 1L7 4M1 10l3-3M10 10L7 7" stroke="#666" />
      </Svg>
    </button>
  </footer>
);

const App: React.FC = () => (
  <div className={`relative flex h-screen flex-col overflow-hidden bg-[#fafafa] ${UI_FONT}`}>
    <TitleBar />
    <Ribbon />
    <QuickBar />
    <div className="flex min-h-0 flex-1">
      <Page />
      <ScrollBar />
      <SideTabs />
      <TaskPane />
      <EdgeStrip />
    </div>
    <StatusBar />
    <div className="pointer-events-none absolute right-[30px] bottom-8 flex items-baseline font-['Noto_Sans_CJK_SC',sans-serif] text-5xl leading-none whitespace-nowrap text-white [text-shadow:2px_2px_1px_#000,3px_3px_1px_#000]">
      <b>头条</b>
      <span className="ml-3 font-['Liberation_Sans',sans-serif] text-[54px] leading-none">@sheji500</span>
      制版技术
    </div>
  </div>
);

export default App;
